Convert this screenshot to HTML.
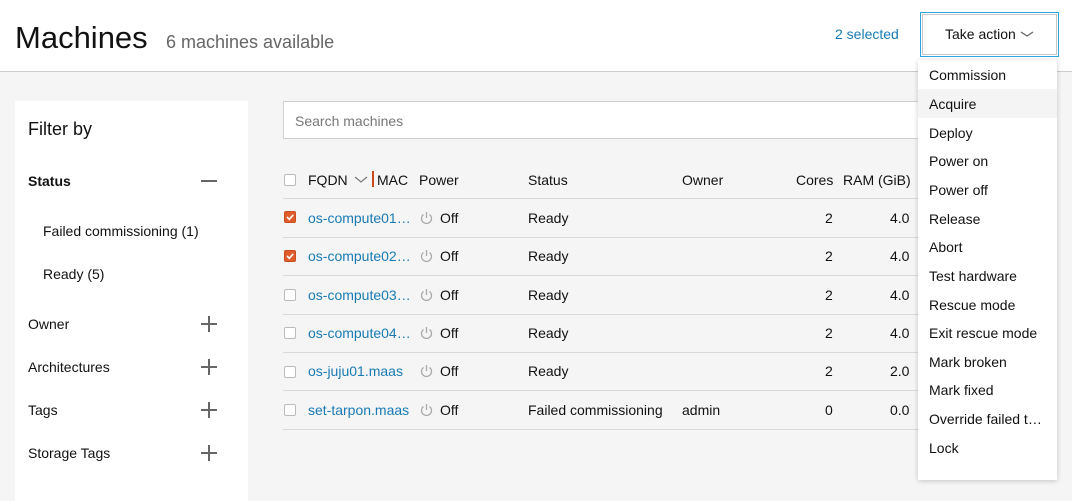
<!DOCTYPE html>
<html><head><meta charset="utf-8"><style>
*{margin:0;padding:0;box-sizing:border-box}
body{width:1072px;height:465px;overflow:hidden;background:#f5f5f5;font-family:"Liberation Sans",sans-serif;font-size:14px;color:#111;position:relative}
.a{position:absolute;white-space:nowrap;line-height:1}
.hdr{position:absolute;left:0;top:0;width:1072px;height:72px;background:#fff;border-bottom:1px solid #cdcdcd}
.side{position:absolute;left:15px;top:101px;width:233px;height:400px;background:#fff}
.ln{position:absolute;left:283px;width:640px;height:1px;background:#d9d9d9}
.cb{position:absolute;left:284px;width:12px;height:12px;border:1px solid #bbb;border-radius:2px;background:#fff}
.cb.on{background:#e05c2a;border-color:#c94d20}
.lk{color:#197bb5}
.pw{position:absolute;width:14px;height:14px}
.dd{position:absolute;left:918px;top:60px;width:139px;height:420px;background:#fff;box-shadow:0 1px 5px rgba(0,0,0,.2)}
.plus{position:absolute;left:201px;width:16px;height:16px}
.plus:before{content:"";position:absolute;left:0;top:7px;width:16px;height:1.5px;background:#666}
.plus:after{content:"";position:absolute;left:7px;top:0;width:1.5px;height:16px;background:#666}
</style></head><body>
<div class="hdr"></div>
<div class="a" style="left:15px;top:22px;font-size:31px;color:#111">Machines</div>
<div class="a" style="left:166px;top:33px;font-size:18px;color:#666">6 machines available</div>
<div class="a lk" style="left:835px;top:27px">2 selected</div>
<div style="position:absolute;left:920px;top:12px;width:139px;height:45px;border:1px solid #2ea6dd"></div>
<div style="position:absolute;left:922px;top:14px;width:135px;height:41px;border:1px solid #c8c8c8;background:#fff"></div>
<div class="a" style="left:945px;top:27px">Take action</div>
<svg style="position:absolute;left:1020px;top:30px" width="14" height="8"><path d="M1 2 L7 6 L13 2" fill="none" stroke="#666" stroke-width="1.3"/></svg>

<div class="side"></div>
<div class="a" style="left:28px;top:120px;font-size:18px">Filter by</div>
<div class="a" style="left:28px;top:174px;font-weight:bold">Status</div>
<div style="position:absolute;left:201px;top:180px;width:16px;height:1.5px;background:#666"></div>
<div class="a" style="left:43px;top:224px">Failed commissioning (1)</div>
<div class="a" style="left:43px;top:267px">Ready (5)</div>
<div class="a" style="left:28px;top:317px">Owner</div><div class="plus" style="top:316px"></div>
<div class="a" style="left:28px;top:360px">Architectures</div><div class="plus" style="top:359px"></div>
<div class="a" style="left:28px;top:403px">Tags</div><div class="plus" style="top:402px"></div>
<div class="a" style="left:28px;top:446px">Storage Tags</div><div class="plus" style="top:445px"></div>

<div style="position:absolute;left:283px;top:101px;width:650px;height:38px;background:#fff;border:1px solid #cfcfcf"></div>
<div class="a" style="left:295px;top:114px;color:#777">Search machines</div>

<div class="cb" style="top:174px"></div>
<div class="a" style="left:308px;top:173px">FQDN</div>
<svg style="position:absolute;left:354px;top:176px" width="14" height="8"><path d="M1 1 L7 6 L13 1" fill="none" stroke="#777" stroke-width="1.2"/></svg>
<div style="position:absolute;left:372px;top:171px;width:2px;height:16px;background:#c84a1c"></div>
<div class="a" style="left:377px;top:173px">MAC</div>
<div class="a" style="left:419px;top:173px">Power</div>
<div class="a" style="left:528px;top:173px">Status</div>
<div class="a" style="left:682px;top:173px">Owner</div>
<div class="a" style="left:796px;top:173px">Cores</div>
<div class="a" style="left:843px;top:173px">RAM (GiB)</div>

<div class="ln" style="top:198px"></div>
<div class="ln" style="top:237px"></div>
<div class="ln" style="top:275px"></div>
<div class="ln" style="top:314px"></div>
<div class="ln" style="top:352px"></div>
<div class="ln" style="top:390px"></div>
<div class="ln" style="top:429px"></div>

<!-- rows -->
<div class="cb on" style="top:211px"><svg width="10" height="10" style="position:absolute;left:0;top:0"><path d="M2 5 L4.3 7.3 L8.3 2.8" fill="none" stroke="#fff" stroke-width="1.6"/></svg></div>
<div class="a lk" style="left:308px;top:211px">os-compute01…</div>
<div class="a" style="left:528px;top:211px">Ready</div><div class="a" style="left:825px;top:211px">2</div><div class="a" style="left:890px;top:211px">4.0</div>

<div class="cb on" style="top:250px"><svg width="10" height="10" style="position:absolute;left:0;top:0"><path d="M2 5 L4.3 7.3 L8.3 2.8" fill="none" stroke="#fff" stroke-width="1.6"/></svg></div>
<div class="a lk" style="left:308px;top:249px">os-compute02…</div>
<div class="a" style="left:528px;top:249px">Ready</div><div class="a" style="left:825px;top:249px">2</div><div class="a" style="left:890px;top:249px">4.0</div>

<div class="cb" style="top:289px"></div>
<div class="a lk" style="left:308px;top:288px">os-compute03…</div>
<div class="a" style="left:528px;top:288px">Ready</div><div class="a" style="left:825px;top:288px">2</div><div class="a" style="left:890px;top:288px">4.0</div>

<div class="cb" style="top:327px"></div>
<div class="a lk" style="left:308px;top:326px">os-compute04…</div>
<div class="a" style="left:528px;top:326px">Ready</div><div class="a" style="left:825px;top:326px">2</div><div class="a" style="left:890px;top:326px">4.0</div>

<div class="cb" style="top:366px"></div>
<div class="a lk" style="left:308px;top:364px">os-juju01.maas</div>
<div class="a" style="left:528px;top:364px">Ready</div><div class="a" style="left:825px;top:364px">2</div><div class="a" style="left:890px;top:364px">2.0</div>

<div class="cb" style="top:404px"></div>
<div class="a lk" style="left:308px;top:403px">set-tarpon.maas</div>
<div class="a" style="left:528px;top:403px">Failed commissioning</div><div class="a" style="left:682px;top:403px">admin</div><div class="a" style="left:825px;top:403px">0</div><div class="a" style="left:890px;top:403px">0.0</div>

<!-- power icons -->
<svg style="position:absolute;left:419px;top:0" width="16" height="465">
<g fill="none" stroke="#aaa" stroke-width="1.3">
<g transform="translate(0,210)"><path d="M4.5 4.5 A5 5 0 1 0 10.5 4.5"/><path d="M7.5 2 V8"/></g>
<g transform="translate(0,248)"><path d="M4.5 4.5 A5 5 0 1 0 10.5 4.5"/><path d="M7.5 2 V8"/></g>
<g transform="translate(0,287)"><path d="M4.5 4.5 A5 5 0 1 0 10.5 4.5"/><path d="M7.5 2 V8"/></g>
<g transform="translate(0,325)"><path d="M4.5 4.5 A5 5 0 1 0 10.5 4.5"/><path d="M7.5 2 V8"/></g>
<g transform="translate(0,363)"><path d="M4.5 4.5 A5 5 0 1 0 10.5 4.5"/><path d="M7.5 2 V8"/></g>
<g transform="translate(0,402)"><path d="M4.5 4.5 A5 5 0 1 0 10.5 4.5"/><path d="M7.5 2 V8"/></g>
</g></svg>
<div class="a" style="left:440px;top:211px">Off</div>
<div class="a" style="left:440px;top:249px">Off</div>
<div class="a" style="left:440px;top:288px">Off</div>
<div class="a" style="left:440px;top:326px">Off</div>
<div class="a" style="left:440px;top:364px">Off</div>
<div class="a" style="left:440px;top:403px">Off</div>

<!-- dropdown -->
<div class="dd"><div style="position:absolute;left:0;top:29px;width:139px;height:29px;background:#f4f4f4"></div></div>
<div class="a" style="left:929px;top:68px">Commission</div>
<div class="a" style="left:929px;top:97px">Acquire</div>
<div class="a" style="left:929px;top:126px">Deploy</div>
<div class="a" style="left:929px;top:154px">Power on</div>
<div class="a" style="left:929px;top:183px">Power off</div>
<div class="a" style="left:929px;top:212px">Release</div>
<div class="a" style="left:929px;top:240px">Abort</div>
<div class="a" style="left:929px;top:269px">Test hardware</div>
<div class="a" style="left:929px;top:298px">Rescue mode</div>
<div class="a" style="left:929px;top:326px">Exit rescue mode</div>
<div class="a" style="left:929px;top:355px">Mark broken</div>
<div class="a" style="left:929px;top:383px">Mark fixed</div>
<div class="a" style="left:929px;top:412px">Override failed t…</div>
<div class="a" style="left:929px;top:441px">Lock</div>
</body></html>
